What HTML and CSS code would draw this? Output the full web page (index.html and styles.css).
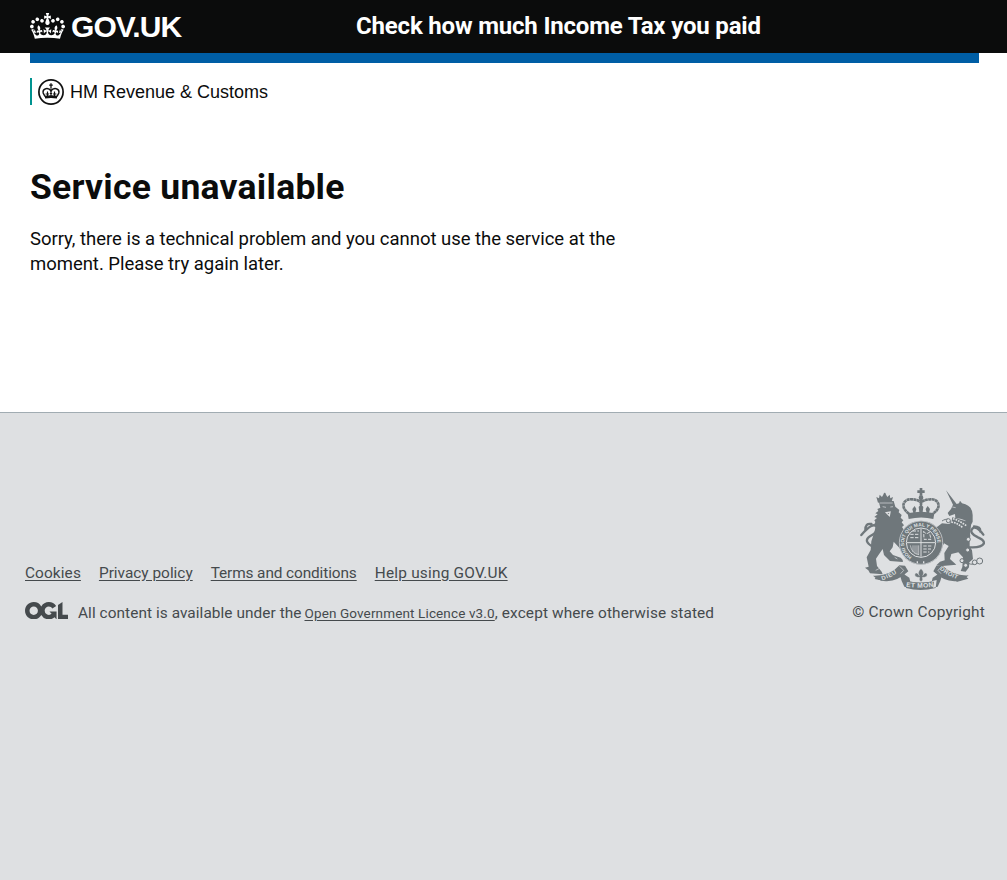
FILE: index.html
```html
<!DOCTYPE html>
<html lang="en">
<head>
<meta charset="utf-8">
<title>Service unavailable</title>
<link rel="stylesheet" href="styles.css">
</head>
<body>
<header class="header">
  <a class="logo" href="#">
    <svg class="logo-crown" viewBox="0 0 132 97" preserveAspectRatio="none" aria-hidden="true"><path fill="currentColor" fill-rule="evenodd" d="M25 30.2c3.5 1.5 7.7-.2 9.1-3.7 1.5-3.6-.2-7.8-3.9-9.2-3.6-1.4-7.6.3-9.1 3.9-1.4 3.5.3 7.5 3.9 9zM9 39.5c3.6 1.5 7.8-.2 9.2-3.7 1.5-3.6-.2-7.8-3.9-9.1-3.6-1.5-7.6.2-9.1 3.8-1.4 3.5.3 7.5 3.8 9zM4.4 57.2c3.5 1.5 7.7-.2 9.1-3.8 1.5-3.6-.2-7.7-3.9-9.1-3.5-1.5-7.6.3-9.1 3.8-1.4 3.5.3 7.6 3.9 9.1zm38.3-21.4c3.5 1.5 7.7-.2 9.1-3.8 1.5-3.6-.2-7.7-3.9-9.1-3.6-1.5-7.6.3-9.1 3.8-1.3 3.6.4 7.7 3.9 9.1zm64.4-5.6c-3.6 1.5-7.8-.2-9.1-3.7-1.5-3.6.2-7.8 3.8-9.2 3.6-1.4 7.7.3 9.2 3.9 1.3 3.5-.4 7.5-3.9 9zm15.9 9.3c-3.6 1.5-7.7-.2-9.1-3.7-1.5-3.6.2-7.8 3.7-9.1 3.6-1.5 7.7.2 9.2 3.8 1.5 3.5-.3 7.5-3.8 9zm4.7 17.7c-3.6 1.5-7.8-.2-9.2-3.8-1.5-3.6.2-7.7 3.9-9.1 3.6-1.5 7.7.3 9.2 3.8 1.3 3.5-.4 7.6-3.9 9.1zM89.3 35.8c-3.6 1.5-7.8-.2-9.2-3.8-1.4-3.6.2-7.7 3.9-9.1 3.6-1.5 7.7.3 9.2 3.8 1.4 3.6-.3 7.7-3.9 9.1zM69.7 17.7l8.9 4.7V9.3l-8.9 2.8c-.2-.3-.5-.6-.9-.9L72.4 0H59.6l3.5 11.2c-.3.3-.6.5-.9.9l-8.8-2.8v13.1l8.8-4.7c.3.3.6.7.9.9l-5 15.4v.1c-.2.8-.4 1.6-.4 2.4 0 4.1 3.1 7.5 7 8.1h.2c.3 0 .7.1 1 .1.4 0 .7 0 1-.1h.2c4-.6 7.1-4.1 7.1-8.1 0-.8-.1-1.7-.4-2.4V34l-5.1-15.4c.4-.2.7-.6 1-.9zM66 92.8c16.9 0 32.8 1.1 47.1 3.2 4-16.9 8.9-26.7 14-33.5l-9.6-3.4c1 4.9 1.1 7.2 0 10.2-1.5-1.4-3-4.3-4.2-8.7L108.6 76c2.8-2 5-3.2 7.5-3.3-4.4 9.4-10 11.9-13.6 11.2-4.3-.8-6.3-4.6-5.6-7.9 1-4.7 5.7-5.9 8-.5 4.3-8.7-3-11.4-7.6-8.8 7.1-7.2 7.9-13.5 2.1-21.1-8 6.1-8.1 12.3-4.5 20.8-4.7-5.4-12.1-2.5-9.5 6.2 3.4-5.2 7.9-2 7.2 3.1-.6 4.3-6.4 7.8-13.5 7.2-10.3-.9-10.9-8-11.2-13.8 2.5-.5 7.1 1.8 11 7.3L80.2 60c-4.1 4.4-8 5.3-12.3 5.4 1.4-4.4 8-11.6 8-11.6H55.5s6.4 7.2 7.9 11.6c-4.2-.1-8-1-12.3-5.4l1.4 16.4c3.9-5.5 8.5-7.7 10.9-7.3-.3 5.8-.9 12.8-11.1 13.8-7.2.6-12.9-2.9-13.5-7.2-.7-5 3.8-8.3 7.1-3.1 2.7-8.7-4.6-11.6-9.4-6.2 3.7-8.5 3.6-14.7-4.6-20.8-5.8 7.6-5 13.9 2.2 21.1-4.7-2.6-11.9.1-7.7 8.8 2.3-5.5 7.1-4.2 8.1.5.7 3.3-1.3 7.1-5.7 7.9-3.5.7-9-1.8-13.5-11.2 2.5.1 4.7 1.3 7.5 3.3l-4.7-15.4c-1.2 4.4-2.7 7.2-4.3 8.7-1.1-3-.9-5.3 0-10.2l-9.5 3.4c5 6.9 9.9 16.7 14 33.5 14.8-2.1 30.8-3.2 47.7-3.2z"/></svg>
    <span class="logo-text">GOV.UK</span>
  </a>
  <a class="service" href="#">Check how much Income Tax you paid</a>
</header>
<div class="container">
  <div class="bar"></div>
  <div class="org">
    <svg class="org-crest" viewBox="0 0 26 26" aria-hidden="true">
      <circle cx="13" cy="13" r="12.1" fill="#fff" stroke="#111" stroke-width="1.7"/>
      <g fill="none" stroke="#111">
        <path stroke-width="1.3" d="M13 4.3v5.5M11.2 6.2h3.6"/>
        <path stroke-width="1.5" d="M7 17.5 5.2 14c-1-5 5.400-5.800 7.800-2.100 2.400-3.700 8.800-2.900 7.800 2.100l-1.800 3.500"/>
        <path stroke-width="1.2" d="M13 10v7M9.500 12.500v4.500M16.500 12.500v4.500M7.600 15h3.400M11.800 14.500h2.400M15 15h3.400"/>
        <path stroke-width="2.800" d="M6.900 18.200q6.100-1 12.200 0"/>
      </g>
    </svg>
    <span class="org-name">HM Revenue &amp; Customs</span>
  </div>
  <main class="main">
    <h1 class="title">Service unavailable</h1>
    <p class="lede">Sorry, there is a technical problem and you cannot use the service at the<br>moment. Please try again later.</p>
  </main>
</div>
<footer class="footer">
  <div class="meta">
    <nav class="links"><a class="cookies" href="#">Cookies</a><a class="privacy" href="#">Privacy policy</a><a class="terms" href="#">Terms and conditions</a><a class="help" href="#">Help using GOV.UK</a></nav>
    <div class="licence">
      <svg class="ogl" viewBox="0 0 483.2 195.7" aria-hidden="true"><path fill="currentColor" d="M421.5 142.8V.1l-50.7 32.3v161.1h112.4v-50.7zm-122.3-9.6A47.12 47.12 0 0 1 221 97.8c0-26 21.1-47.1 47.1-47.1 16.7 0 31.4 8.7 39.7 21.8l42.7-27.2A97.63 97.63 0 0 0 268.1 0c-36.5 0-68.3 20.1-85.1 49.7A98 98 0 0 0 97.8 0C43.9 0 0 43.9 0 97.8s43.9 97.8 97.8 97.8c36.5 0 68.3-20.1 85.1-49.7a97.76 97.76 0 0 0 149.6 25.4l19.4 22.2h3v-87.8h-80l24.3 27.5zM97.8 145c-26 0-47.1-21.1-47.1-47.1s21.1-47.1 47.1-47.1 47.1 21.1 47.1 47.1S123.8 145 97.8 145"/></svg>
      <span class="l1">All content is available under the</span>
      <a class="l2" href="#">Open Government Licence v3.0</a><span class="l3">, except where otherwise stated</span>
    </div>
  </div>
  <a class="copyright" href="#">
    <svg class="arms" viewBox="45 24 375 306" aria-hidden="true">
      <defs>
        <path id="garter" d="M200 231A50 50 0 1 1 256 230"/>
        <path id="scroll-l" d="M112 301Q144 291 174 264"/>
        <path id="scroll-m" d="M183 320Q228 328 280 317"/>
        <path id="scroll-r" d="M284 268Q312 292 360 305"/>
      </defs>
      <g fill="#6f777b">
        <!-- lion -->
        <path d="M101 64l45-1 5 17 12 10-2 7 9 8-3 8 8 8-5 6 7 9-6 5 6 9-6 6 9 12-4 9 4 20-6 24-11-18-17-18-3 17-9 12 10 11 23 8q9 7 6 13l-38-3-18-18-4-18-12 17-8 12 3 22 14 17 3 8-38-3-5-9-10-8 11-3-6-28 12-22 2-26 9-27 4-18-5-4 4-9-3-5 8-7-8-3 10-8-7-3 9-7-3-6 9-4z"/>
        <!-- unicorn -->
        <path d="M303 31l32 41 7-2 3-8 6 8q32 7 32 35v20l-5 10q-20-21-47-20l-1-13-17 6-5-9 10-12 6-13zM322 112L379 128 375 162 316 142zM291 130l22 2 10-6 24 20 24 2 5 18-3 32 8 13 3 26-11 10-1 15-10 13-15-2 5-12 2-29-14-15-21 5-4 15 9 8 10 9-42 4-18-2 11-11 14-4-1-22 13-21-14-8-4 9-12-5 3-13-11-9 4-15-11-3 3-8z"/>
        <path d="M95 288L116 290 121 304 89 297zM362 289l-21 0-7 17 36-10z"/>
        <!-- scroll -->
        <path d="M84 287q51 2 79-31l17 1 10 17q-34 33-73 29-16-1-33-16zM371 286q-46 3-81-31l-16 2-9 17q35 35 75 29 16-2 31-17zM165 286l8-6 20 13 3 12-7 0 3 18-14-3-8-17zM291 286l-8-6-20 13-3 12 7 0-3 18 14-3 8-17zM180 300q47 15 95 0l-3 24q-46 12-89 0z"/>
        <!-- royal crown -->
        <path d="M224 24h8v7h7v8h-7v8h-8v-8h-7v-8h7zM188 100q40-9 80 0l-3 17q-36-9-74 0z"/>
        <circle cx="228" cy="53" r="7"/>
        <path d="M205 99l-3-12 7-9 5 9-3 12zM245 99l-3-12 6-9 7 9-3 12zM223 96l-2-15 7-9 7 9-2 15z"/>
        <path d="M99 68l-5-17 8 4 2-11 7 7 5-9h6l5 9 7-7 2 11 8-4-5 17q-20-5-40 0z"/>
        <circle cx="119" cy="41" r="3"/>
        <circle cx="228" cy="188" r="66"/>
      </g>
      <g fill="none" stroke="#6f777b">
        <path stroke-width="8" stroke-dasharray="9 1" d="M192 101C162 80 177 55 201 58q19 1 27 10 8-9 27-10c24-3 39 22 9 43M228 56v20"/>
        <path stroke-width="7" stroke-linecap="round" d="M83 200Q53 183 75 169 103 154 94 139 83 126 49 165M79 132q-18-4-18 19M375 202Q409 204 417 190 418 180 399 172 371 159 382 146 393 135 415 164M387 139q20 0 19 16"/>
        <path stroke-width="3" d="M291 123c20-13 31 1 23 10s-14 28-5 38 39-10 62 11M369 183c8 20 0 37-16 55M364 248q25 12 40-5"/>
        <g stroke-width="3" fill="#dee0e2"><circle cx="310" cy="122" r="6"/><circle cx="370" cy="178" r="6"/><circle cx="368" cy="210" r="6"/><circle cx="351" cy="242" r="6"/><circle cx="362" cy="256" r="6"/><circle cx="389" cy="247" r="7"/><circle cx="404" cy="243" r="9"/></g>
      </g>
      <g fill="none" stroke="#dee0e2">
        <circle cx="228" cy="188" r="65" stroke-width="2"/>
        <circle cx="228" cy="188" r="44" stroke-width="3"/>
        <path stroke-width="3" d="M228 146v84M186 188h84"/>
        <path stroke-width="3" stroke-dasharray="10 4" d="M196 163h27M196 173h27M203 153h19M235 198h27M235 207h23M235 216h18M236 154l8 8 9-5 5 21h-21z"/>
        <path stroke-width="2" d="M196 196q4 25 26 28M204 196v20M210 196v25M216 196v27M221 196v28"/>
        <path stroke-width="5" stroke-dasharray="5 3" d="M324 116q24 8 42 23M319 126q20 3 35 18"/>
        <path stroke-width="2" d="M104 69h39M113 80l10 2M136 81l8-1M322 81l10 2M102 266l-10 5M157 237l-8-5"/>
        <path stroke-width="4" d="M124 98l11-2-2 11zM217 244v6M236 244v6"/>
        <path stroke-width="2" d="M164 259l12 12-9 10M290 259l-11 12 9 10"/>
      </g>
      <path d="M228 266q12 10 5 21 8-13 13-5 3 7-8 10h-6l1 8-5 5-5-5 1-8h-6q-11-3-8-10 5-8 13 5-7-11 5-21z" fill="#6f777b" stroke="#dee0e2"/>
      <g class="motto">
        <text font-size="14.5"><textPath href="#garter">HONI SOIT QUI MAL Y PENSE</textPath></text>
        <text font-size="18" letter-spacing="2"><textPath href="#scroll-l">DIEU</textPath></text>
        <text font-size="20" letter-spacing="1"><textPath href="#scroll-m">ET MON</textPath></text>
        <text font-size="18" letter-spacing="1"><textPath href="#scroll-r">DROIT</textPath></text>
      </g>
    </svg>
    <span class="copy-text">© Crown Copyright</span>
  </a>
</footer>
</body>
</html>
```

FILE: styles.css
```css
* { box-sizing: border-box; }
body { margin: 0; background: #dee0e2; color: #0b0c0c; font-family: Roboto, sans-serif; min-height: 880px; display: flex; flex-direction: column; }
.header { height: 53px; background: #0b0c0c; color: #fff; display: flex; align-items: center; padding-left: 30px; }
.header a { color: inherit; text-decoration: none; white-space: nowrap; }
.logo { display: flex; align-items: center; width: 326px; }
.logo-crown { width: 35px; height: 26px; margin: 0 6px 1px 0; }
.logo-text { font: bold 30px/30px "Liberation Sans", Arial, sans-serif; letter-spacing: -0.9px; }
.service { font-size: 24px; font-weight: 700; line-height: 30px; letter-spacing: -0.18px; padding-bottom: 2px; }
.container { background: #fff; height: 359px; padding: 0 28px 0 30px; }
.bar { height: 10px; background: #005ea5; }
.org { margin-top: 15px; height: 27px; display: flex; align-items: center; border-left: 2px solid #009390; padding-left: 6px; font: 18px/27px "Liberation Sans", Arial, sans-serif; }
.org-crest { width: 26px; height: 26px; margin-right: 6px; }
.org-name { padding-top: 2px; }
.main { padding-top: 62px; }
.title { margin: 0; font-size: 35.5px; line-height: 40px; font-weight: 700; letter-spacing: 0.26px; }
.lede { margin: 20px 0 0; font-size: 18.5px; line-height: 25px; letter-spacing: -0.03px; white-space: nowrap; }
.footer { flex: 1; border-top: 1px solid #a1acb2; background: #dee0e2; color: #454a4d; display: flex; justify-content: space-between; align-items: flex-start; padding: 75px 22px 0 25px; font-size: 15.4px; line-height: 20px; white-space: nowrap; }
.footer a { color: inherit; text-underline-offset: 2px; }
.meta { padding-top: 75px; }
.links { display: flex; gap: 18px; }
.cookies { letter-spacing: 0.1px; }
.privacy { letter-spacing: 0; }
.terms { letter-spacing: -0.11px; }
.help { letter-spacing: 0.22px; }
.licence { display: flex; align-items: flex-start; margin-top: 19px; line-height: 22px; }
.ogl { width: 43px; height: 17.4px; margin-right: 10px; }
.l1 { letter-spacing: 0.06px; }
.l2 { font-size: 13.5px; letter-spacing: 0.13px; margin-left: 3px; line-height: 23px; }
.l3 { letter-spacing: 0.12px; }
.copyright { display: flex; flex-direction: column; align-items: flex-end; text-decoration: none; }
.arms { width: 125px; height: 102px; }
.copy-text { margin-top: 12px; letter-spacing: 0.2px; }
.motto { fill: #dee0e2; font-family: "Liberation Sans", sans-serif; font-weight: 700; }
```
